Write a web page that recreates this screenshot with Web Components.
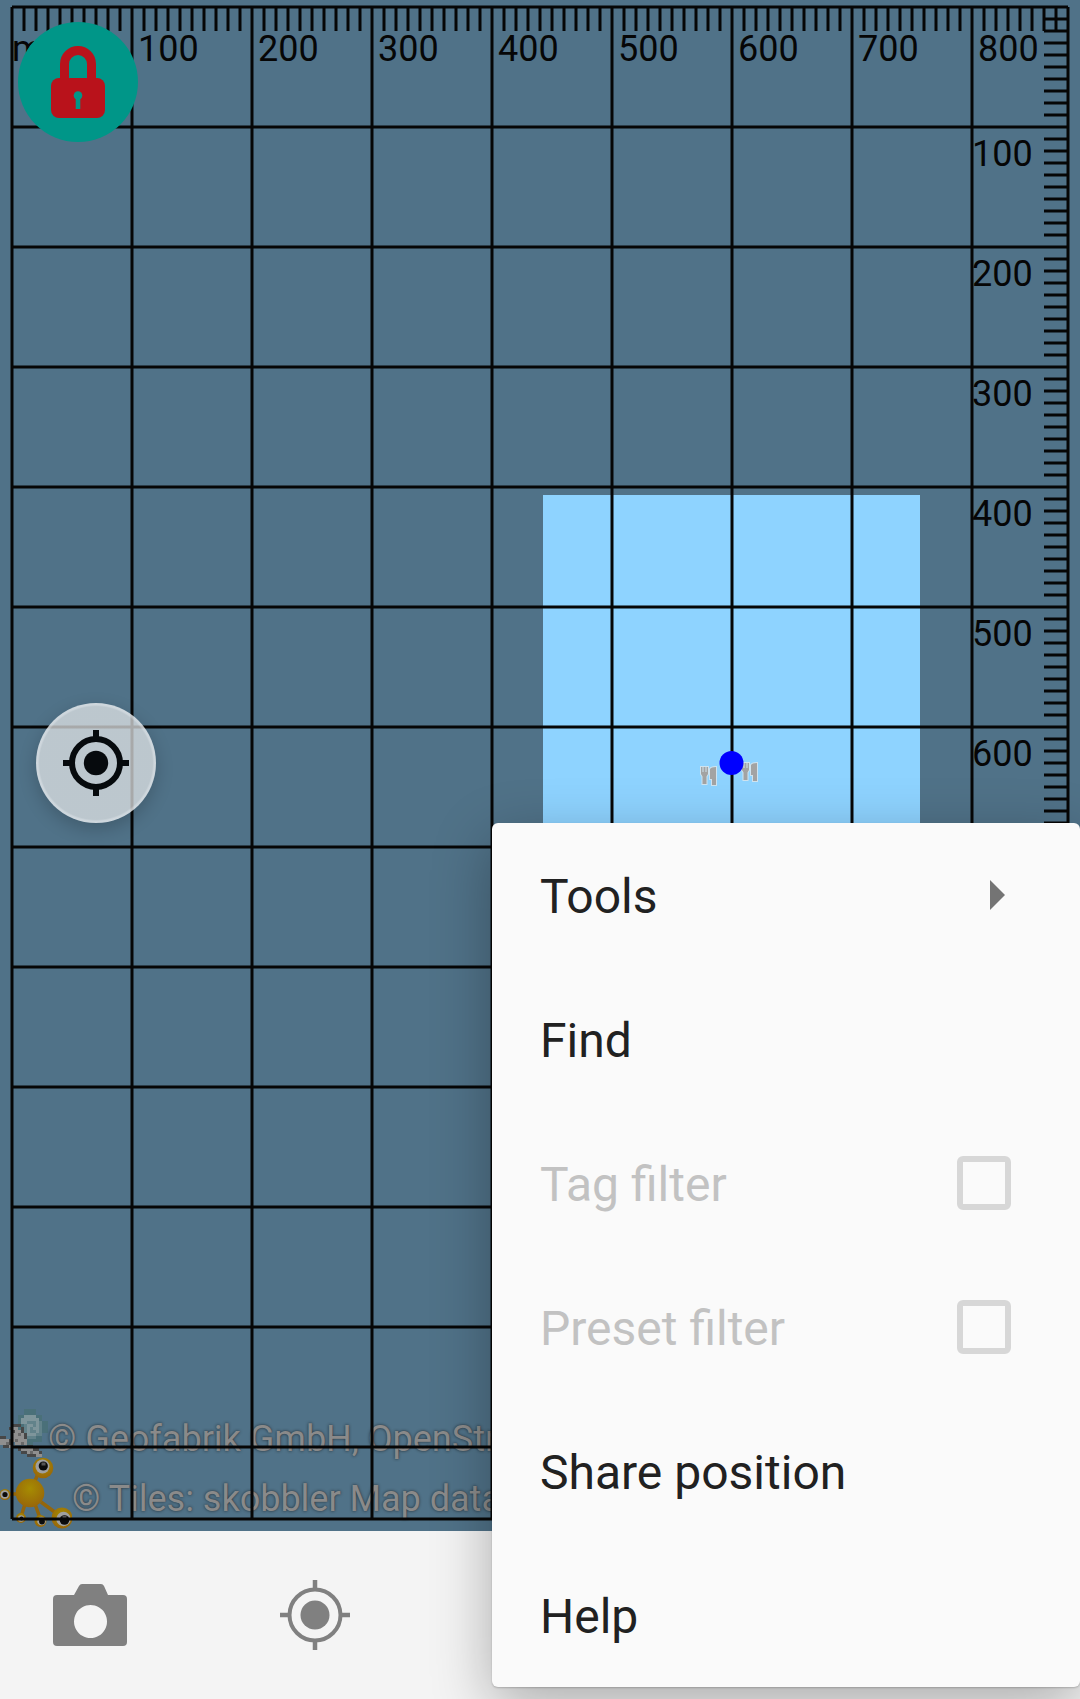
<!DOCTYPE html>
<html lang="en">
<head>
<meta charset="utf-8">
<meta name="viewport" content="width=device-width, initial-scale=1">
<title>Map editor</title>
<style>
  html, body { margin: 0; height: 100%; }
  body { font-family: Roboto, "Noto Sans", sans-serif; overflow: hidden; }
</style>
</head>
<body>
<map-app>
  <map-view slot="map">
    <map-credit slot="credits">
      <svg slot="logo" width="48" height="60" viewBox="0 0 16 20" shape-rendering="crispEdges" aria-hidden="true">
        <g fill="#4a7079">
          <path d="M8 0h4v2h2v2h2v4h-2v3h-3v1H9v-2H7V8H6V2h2z"/>
        </g>
        <path fill="#62828a" d="M7 3h6v1h1v5h-2v1H9V9H8V5H7z"/>
        <path fill="#7e959b" d="M8 2h4v1h1v1H8zM7 3h2v2H7zM12 4h1v4h-1zM9 8h3v1H9zM9 5h2v1H9zM9 6h1v2H9zM11 6h1v1h-1z"/>
        <path fill="#8f8f8f" d="M4 6h2v1h1v1h1v2h1v2H5v-1H4zM0 10h3v1h1v2H2v-1H0zM7 13h4v1h2v1h1v1H9v-1H7z"/>
        <path fill="#474747" d="M4 5h3v1H4zM3 6h1v1H3zM4 7h1v1H4zM0 9h2v1H0zM3 10h1v2H3zM1 12h2v1H1zM7 6h1v2H7zM8 8h1v2H8zM6 13h1v1H6zM7 14h2v1H7zM9 12h2v1H9zM11 13h2v1h-2zM13 14h1v1h-1zM9 15h3v1H9z"/>
        <path fill="#696969" d="M6 8h1v1H6zM5 10h1v1H5zM7 11h1v1H7zM2 11h1v1H2zM10 14h1v1h-1z"/>
      </svg>
      © Geofabrik GmbH, OpenStr
    </map-credit>
    <map-credit slot="credits">
      <svg slot="logo" width="72" height="72" viewBox="0 0 72 72" aria-hidden="true">
        <defs>
          <radialGradient id="bug" cx=".5" cy=".35" r=".65">
            <stop offset="0" stop-color="#a68c02"/><stop offset="1" stop-color="#98660a"/>
          </radialGradient>
        </defs>
        <path d="M34 26 38 17M18 37H8M25 47 21 60M35 47 40 61M41 45 56 56" stroke="#94660b" stroke-width="3.500" fill="none"/>
        <g fill="url(#bug)">
          <circle cx="30" cy="36" r="14.300"/><circle cx="43" cy="11" r="10.300"/>
          <circle cx="5" cy="37.500" r="5.500"/><circle cx="21" cy="61" r="5"/>
          <circle cx="40.500" cy="64" r="6"/><circle cx="62" cy="61" r="10.500"/>
        </g>
        <g fill="#a0a0a0">
          <circle cx="42.500" cy="9.500" r="7"/><circle cx="4.700" cy="37.500" r="4.300"/>
          <circle cx="21" cy="61.500" r="3.200"/><circle cx="41.500" cy="64" r="4.300"/><circle cx="63.500" cy="62" r="7.200"/>
        </g>
        <g fill="#0c0c0c">
          <circle cx="43.300" cy="9" r="4.600"/><circle cx="5" cy="37.500" r="2.600"/>
          <circle cx="21.500" cy="61.500" r="2"/><circle cx="42" cy="64.500" r="2.900"/><circle cx="64.500" cy="63" r="4.800"/>
        </g>
        <path d="M41.500 5.500h4v3h-4zM62.500 59h4v3h-4z" fill="#565656"/>
      </svg>
      © Tiles: skobbler Map data
    </map-credit>
  </map-view>
  <tool-bar slot="bar">
    <button type="button" aria-label="Take photo">
      <svg width="74" height="72" viewBox="0 0 74 72" aria-hidden="true">
        <path fill="#808080" fill-rule="evenodd" d="M27 5h21q2 0 3 2l4 9h15q4 0 4 4v43q0 4-4 4H4q-4 0-4-4V20q0-4 4-4h17l5-9q1-2 3-2zM37.500 26a16.500 16.500 0 1 0 .01 0z"/>
      </svg>
    </button>
    <button type="button" aria-label="Show my location">
      <svg width="72" height="72" viewBox="0 0 72 72" aria-hidden="true">
        <circle cx="36" cy="36" r="25.500" fill="none" stroke="#808080" stroke-width="4"/>
        <circle cx="36" cy="36" r="14.500" fill="#808080"/>
        <path d="M36 1v11M36 60v11M1 36h11M60 36h11" stroke="#808080" stroke-width="4.500"/>
      </svg>
    </button>
  </tool-bar>
  <overflow-menu slot="menu">
    <menu-item kind="submenu">Tools</menu-item>
    <menu-item>Find</menu-item>
    <menu-item kind="check">Tag filter</menu-item>
    <menu-item kind="check">Preset filter</menu-item>
    <menu-item>Share position</menu-item>
    <menu-item>Help</menu-item>
  </overflow-menu>
</map-app>

<script>
const define = (name, html, extra) => {
  const tpl = document.createElement('template');
  tpl.innerHTML = html;
  customElements.define(name, class extends HTMLElement {
    constructor() {
      super();
      this.attachShadow({ mode: 'open' }).append(tpl.content.cloneNode(true));
    }
    connectedCallback() { if (extra) extra(this, this.shadowRoot); }
  });
};

define('map-app', `
  <style>
    :host { display: flex; flex-direction: column; height: 100vh; position: relative; overflow: hidden; background: #f4f4f4; }
    ::slotted([slot=map]) { flex: 1; }
    ::slotted([slot=menu]) { position: absolute; right: 0; bottom: 12px; }
  </style>
  <slot name="map"></slot><slot name="bar"></slot><slot name="menu"></slot>`);

define('tool-bar', `
  <style>
    :host { display: flex; gap: 45px; height: 168px; background: #f4f4f4; }
    ::slotted(button) { flex: none; width: 180px; padding: 0; border: 0; background: none; display: grid; place-items: center; }
  </style>
  <slot></slot>`);

define('overflow-menu', `
  <style>
    :host { display: block; width: min(588px, 100%); background: #fafafa; border-radius: 6px; box-shadow: 0 18px 60px rgba(0,0,0,.3), 0 1px 2px rgba(0,0,0,.2); }
  </style>
  <div role="menu"><slot></slot></div>`);

define('menu-item', `
  <style>
    :host { display: block; }
    button, label { box-sizing: border-box; width: 100%; height: 144px; padding: 0 69px 0 48px; border: 0; background: none;
      display: flex; align-items: center; justify-content: space-between; font: 400 48px/56px Roboto, "Noto Sans", sans-serif; color: #212121; text-align: left; }
    label { color: #c2c2c2; }
    span { padding-top: 4px; }
    svg { margin-right: 6px; }
    input { appearance: none; flex: none; box-sizing: border-box; width: 54px; height: 54px; margin: 0; border: 6px solid #d7d7d7; border-radius: 6px; }
  </style>`, (host, root) => {
    const kind = host.getAttribute('kind');
    const row = document.createElement(kind === 'check' ? 'label' : 'button');
    row.innerHTML = '<span><slot></slot></span>';
    if (kind === 'check') row.innerHTML += '<input type="checkbox" disabled>';
    else { row.type = 'button'; row.setAttribute('role', 'menuitem'); }
    if (kind === 'submenu') row.innerHTML += '<svg width="15" height="30" viewBox="0 0 15 30" aria-hidden="true"><path d="M0 0 15 15 0 30z" fill="#747474"/></svg>';
    root.append(row);
  });

define('map-credit', `
  <style>
    :host { display: flex; align-items: flex-end; height: 60px; font-size: 36px; line-height: 60px; color: #8a8a8a; white-space: nowrap; text-shadow: 0 0 3px rgba(30,35,40,.9); }
    ::slotted(svg) { display: block; flex: none; }
  </style>
  <slot name="logo"></slot><span><slot></slot></span>`);

define('round-button', `
  <style>
    :host { display: block; }
    button { display: grid; place-items: center; width: 120px; height: 120px; padding: 0; border: 0; border-radius: 50%;
      background: var(--fill); box-shadow: var(--glow, none); }
  </style>
  <button type="button"><slot></slot></button>`, (host, root) => {
    root.querySelector('button').setAttribute('aria-label', host.getAttribute('name'));
  });

/* Draws the metre grid and its rulers for the current size of the map. */
function drawMap(w, h) {
  const step = 120, tick = 12, left = 12, top = 7, right = w - 12, bottom = h - 12;
  let d = `M${left} ${top}H${right}M${right} ${top}V${bottom}M${left} ${bottom}H${right}`;
  let text = `<text x="${left}" y="61">m</text>`;
  for (let x = left, k = 0; x < right; x += step, k++) {
    d += `M${x} ${top}V${bottom}`;
    if (k) text += `<text x="${x + 6}" y="61">${k * 100}</text>`;
  }
  for (let y = top + step, k = 1; y < bottom; y += step, k++) {
    d += `M${left} ${y}H${right}`;
    if (y < 800) text += `<text x="${right - 96}" y="${y + 39}">${k * 100}</text>`;
  }
  for (let x = left; x < right; x += tick) d += `M${x} ${top}v24`;
  for (let y = top + tick; y < bottom; y += tick) d += `M${right} ${y}h-24`;
  return `<path d="${d}" stroke="#060606" stroke-width="3" fill="none"/><g fill="#060606">${text}</g>`;
}

const fork = (x, y) => `<g transform="translate(${x} ${y})" fill="#a3a3a3" stroke="#cfe3ef" stroke-width="2" paint-order="stroke">
  <path d="M0 1h1.500v5h1V1h2v5h1V1H7v7L5.500 10.500V18h-4v-7.500L0 8zM9 3q1-2 6-2v18h-4v-6H9z"/></g>`;

define('map-view', `
  <style>
    :host { display: block; position: relative; overflow: hidden; background: #507288; }
    .layer { position: absolute; inset: 0; display: block; width: 100%; height: 100%; font: 36px Roboto, "Noto Sans", sans-serif; }
    .credits { position: absolute; inset: auto 0 2px 0; }
    .lock { position: absolute; left: 18px; top: 22px; --fill: #009688; }
    .side { position: absolute; inset: 7px auto 12px 36px; display: flex; align-items: center; }
    .side round-button { --fill: radial-gradient(closest-side, rgba(230,232,233,.72) 94%, rgba(238,240,242,.8) 97%); --glow: 0 6px 18px rgba(0,0,0,.2); }
  </style>
  <svg class="layer" aria-hidden="true"><rect x="543" y="495" width="377" height="420" fill="#8ed3ff"/></svg>
  <div class="credits"><slot name="credits"></slot></div>
  <svg class="layer" id="grid"></svg>
  <svg class="layer" aria-hidden="true">${fork(701, 766)}${fork(742, 762)}<circle cx="731.500" cy="763" r="12" fill="#0000ff"/></svg>
  <round-button class="lock" name="Unlock editing">
    <svg width="120" height="120" viewBox="0 0 120 120" aria-hidden="true">
      <path d="M46.500 60V42a13.500 13.500 0 0 1 27 0v18" fill="none" stroke="#b9121b" stroke-width="9"/>
      <rect x="33" y="56" width="54" height="40" rx="8" fill="#b9121b"/>
      <circle cx="60" cy="73.500" r="4.300" fill="#009688"/><path d="M60 73v14" stroke="#009688" stroke-width="4.600"/>
    </svg>
  </round-button>
  <div class="side">
    <round-button name="Follow position">
      <svg width="72" height="72" viewBox="0 0 72 72" aria-hidden="true">
        <circle cx="36" cy="36" r="24" fill="none" stroke="#060a0d" stroke-width="6"/>
        <circle cx="36" cy="36" r="12.200" fill="#060a0d"/>
        <path d="M36 3v8M36 61v8M3 36h8M61 36h8" stroke="#060a0d" stroke-width="6"/>
      </svg>
    </round-button>
  </div>`, (host, root) => {
    const draw = () => { root.getElementById('grid').innerHTML = drawMap(host.clientWidth, host.clientHeight); };
    new ResizeObserver(draw).observe(host);
    requestAnimationFrame(draw);
  });
</script>
</body>
</html>
